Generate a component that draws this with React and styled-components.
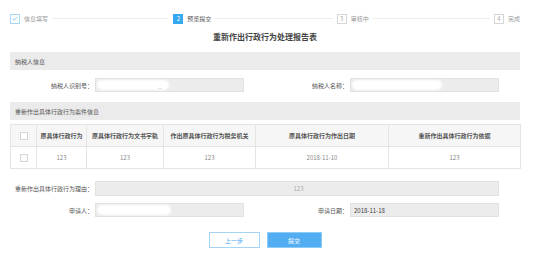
import styled, { createGlobalStyle } from "styled-components";

const GlobalStyle = createGlobalStyle`
  html, body {
    margin: 0;
    padding: 0;
    background: #fff;
    font-family: "Noto Sans CJK SC", "Liberation Sans", sans-serif;
  }
`;

const Page = styled.div`
  width: 510px;
  padding: 13px 0 0 10px;
`;

const Steps = styled.div`
  display: flex;
  align-items: center;
  height: 11px;
`;

const Step = styled.div`
  display: flex;
  align-items: center;
  gap: 4px;
  font-size: 6px;
  color: ${(p) => (p.active ? "#555" : "#999")};
  white-space: nowrap;
`;

const StepBox = styled.div`
  width: 10px;
  height: 10px;
  box-sizing: border-box;
  display: flex;
  align-items: center;
  justify-content: center;
  font-size: 6px;
  border: 1px solid ${(p) => (p.variant === "done" ? "#a8d6f5" : p.variant === "active" ? "#34a9ef" : "#d6d6d6")};
  background: ${(p) => (p.variant === "active" ? "#34a9ef" : "#fff")};
  color: ${(p) => (p.variant === "active" ? "#fff" : "#aaa")};
`;

const StepLine = styled.div`
  flex: 1;
  height: 1px;
  background: #ececec;
  margin: 0 4px;
`;

const Title = styled.h1`
  margin: 7px 0 0;
  text-align: center;
  font-size: 8px;
  font-weight: bold;
  color: #444;
  line-height: 12px;
`;

const SectionHeader = styled.div`
  height: 18px;
  margin-top: ${(p) => p.top}px;
  background: #ebebeb;
  display: flex;
  align-items: center;
  padding-left: 5px;
  font-size: 6px;
  color: #555;
`;

const FormRow = styled.div`
  display: grid;
  grid-template-columns: 255px 255px;
  margin-top: ${(p) => p.top}px;
`;

const Field = styled.div`
  display: flex;
  align-items: center;
  grid-column: ${(p) => (p.wide ? "1 / 3" : "auto")};
`;

const Label = styled.div`
  width: 83px;
  text-align: right;
  font-size: 6px;
  color: #555;
  white-space: nowrap;
  margin-right: 2px;
`;

const Input = styled.div`
  position: relative;
  width: ${(p) => (p.wide ? 404 : 149)}px;
  height: ${(p) => p.h || 14}px;
  box-sizing: border-box;
  background: #ececec;
  border: 1px solid #e2e2e2;
  display: flex;
  align-items: center;
  justify-content: ${(p) => (p.center ? "center" : "flex-start")};
  padding-left: 3px;
  font-size: 6px;
  color: ${(p) => (p.muted ? "#aaa" : "#444")};
  overflow: hidden;
`;

const Mask = styled.span`
  position: absolute;
  left: 1px;
  top: 1px;
  width: ${(p) => p.w}px;
  height: 10px;
  background: #fff;
  border-radius: 6px;
  filter: blur(1px);
`;

const Dots = styled.span`
  position: absolute;
  left: 62px;
  top: 3px;
  font-size: 6px;
  color: #999;
`;

const Table = styled.table`
  width: 510px;
  margin-top: 4px;
  border-collapse: collapse;
  table-layout: fixed;
  border: 1px solid #e4e4e4;
  font-size: 6px;
`;

const Th = styled.th`
  height: 21px;
  background: #f6f6f6;
  border: 1px solid #e4e4e4;
  font-weight: bold;
  color: #555;
  text-align: center;
  padding: 0;
`;

const Td = styled.td`
  height: 21px;
  border: 1px solid #e4e4e4;
  color: #888;
  text-align: center;
  padding: 0;
`;

const Check = styled.span`
  display: inline-block;
  width: 6px;
  height: 6px;
  border: 1px solid #d4d4d4;
  background: #fff;
  vertical-align: middle;
`;

const Buttons = styled.div`
  display: flex;
  justify-content: center;
  gap: 7px;
  margin-top: 15px;
`;

const Button = styled.button`
  width: ${(p) => (p.primary ? 55 : 51)}px;
  height: 16px;
  box-sizing: border-box;
  border: 1px solid ${(p) => (p.primary ? "#8ecbf6" : "#a6d4f5")};
  background: ${(p) => (p.primary ? "#52adf3" : "#fff")};
  color: ${(p) => (p.primary ? "#fff" : "#4aa6ee")};
  font-size: 6px;
  font-family: inherit;
  padding: 0;
`;

const CheckIcon = () => (
  <svg width="6" height="5" viewBox="0 0 6 5">
    <path d="M0.5 2.6 L2.2 4.2 L5.5 0.8" fill="none" stroke="#6cbcf0" strokeWidth="0.8" />
  </svg>
);

const columns = [
  { w: 26, t: "" },
  { w: 50, t: "原具体行政行为" },
  { w: 77, t: "原具体行政行为文书字轨" },
  { w: 92, t: "作出原具体行政行为税务机关" },
  { w: 133, t: "原具体行政行为作出日期" },
  { w: 132, t: "重新作出具体行政行为依据" },
];

const row = ["123", "123", "123", "2018-11-10", "123"];

export default function App() {
  return (
    <>
      <GlobalStyle />
      <Page>
        <Steps>
          <Step>
            <StepBox variant="done">
              <CheckIcon />
            </StepBox>
            信息填写
          </Step>
          <StepLine />
          <Step active>
            <StepBox variant="active">2</StepBox>
            预览提交
          </Step>
          <StepLine />
          <Step>
            <StepBox>3</StepBox>
            审核中
          </Step>
          <StepLine />
          <Step>
            <StepBox>4</StepBox>
            完成
          </Step>
        </Steps>

        <Title>重新作出行政行为处理报告表</Title>

        <SectionHeader top={9}>纳税人信息</SectionHeader>
        <FormRow top={8}>
          <Field>
            <Label>纳税人识别号：</Label>
            <Input>
              <Mask w={72} />
              <Dots>..</Dots>
            </Input>
          </Field>
          <Field>
            <Label>纳税人名称：</Label>
            <Input>
              <Mask w={90} />
            </Input>
          </Field>
        </FormRow>

        <SectionHeader top={10}>重新作出具体行政行为案件信息</SectionHeader>
        <Table>
          <colgroup>
            {columns.map((c, i) => (
              <col key={i} style={{ width: c.w }} />
            ))}
          </colgroup>
          <thead>
            <tr>
              {columns.map((c, i) => (
                <Th key={i}>{i === 0 ? <Check /> : c.t}</Th>
              ))}
            </tr>
          </thead>
          <tbody>
            <tr>
              <Td>
                <Check />
              </Td>
              {row.map((v, i) => (
                <Td key={i}>{v}</Td>
              ))}
            </tr>
          </tbody>
        </Table>

        <FormRow top={12}>
          <Field wide>
            <Label>重新作出具体行政行为理由：</Label>
            <Input wide center muted h={15}>
              123
            </Input>
          </Field>
        </FormRow>
        <FormRow top={7}>
          <Field>
            <Label>申请人：</Label>
            <Input>
              <Mask w={74} />
            </Input>
          </Field>
          <Field>
            <Label>申请日期：</Label>
            <Input>2018-11-18</Input>
          </Field>
        </FormRow>

        <Buttons>
          <Button>上一步</Button>
          <Button primary>提交</Button>
        </Buttons>
      </Page>
    </>
  );
}
